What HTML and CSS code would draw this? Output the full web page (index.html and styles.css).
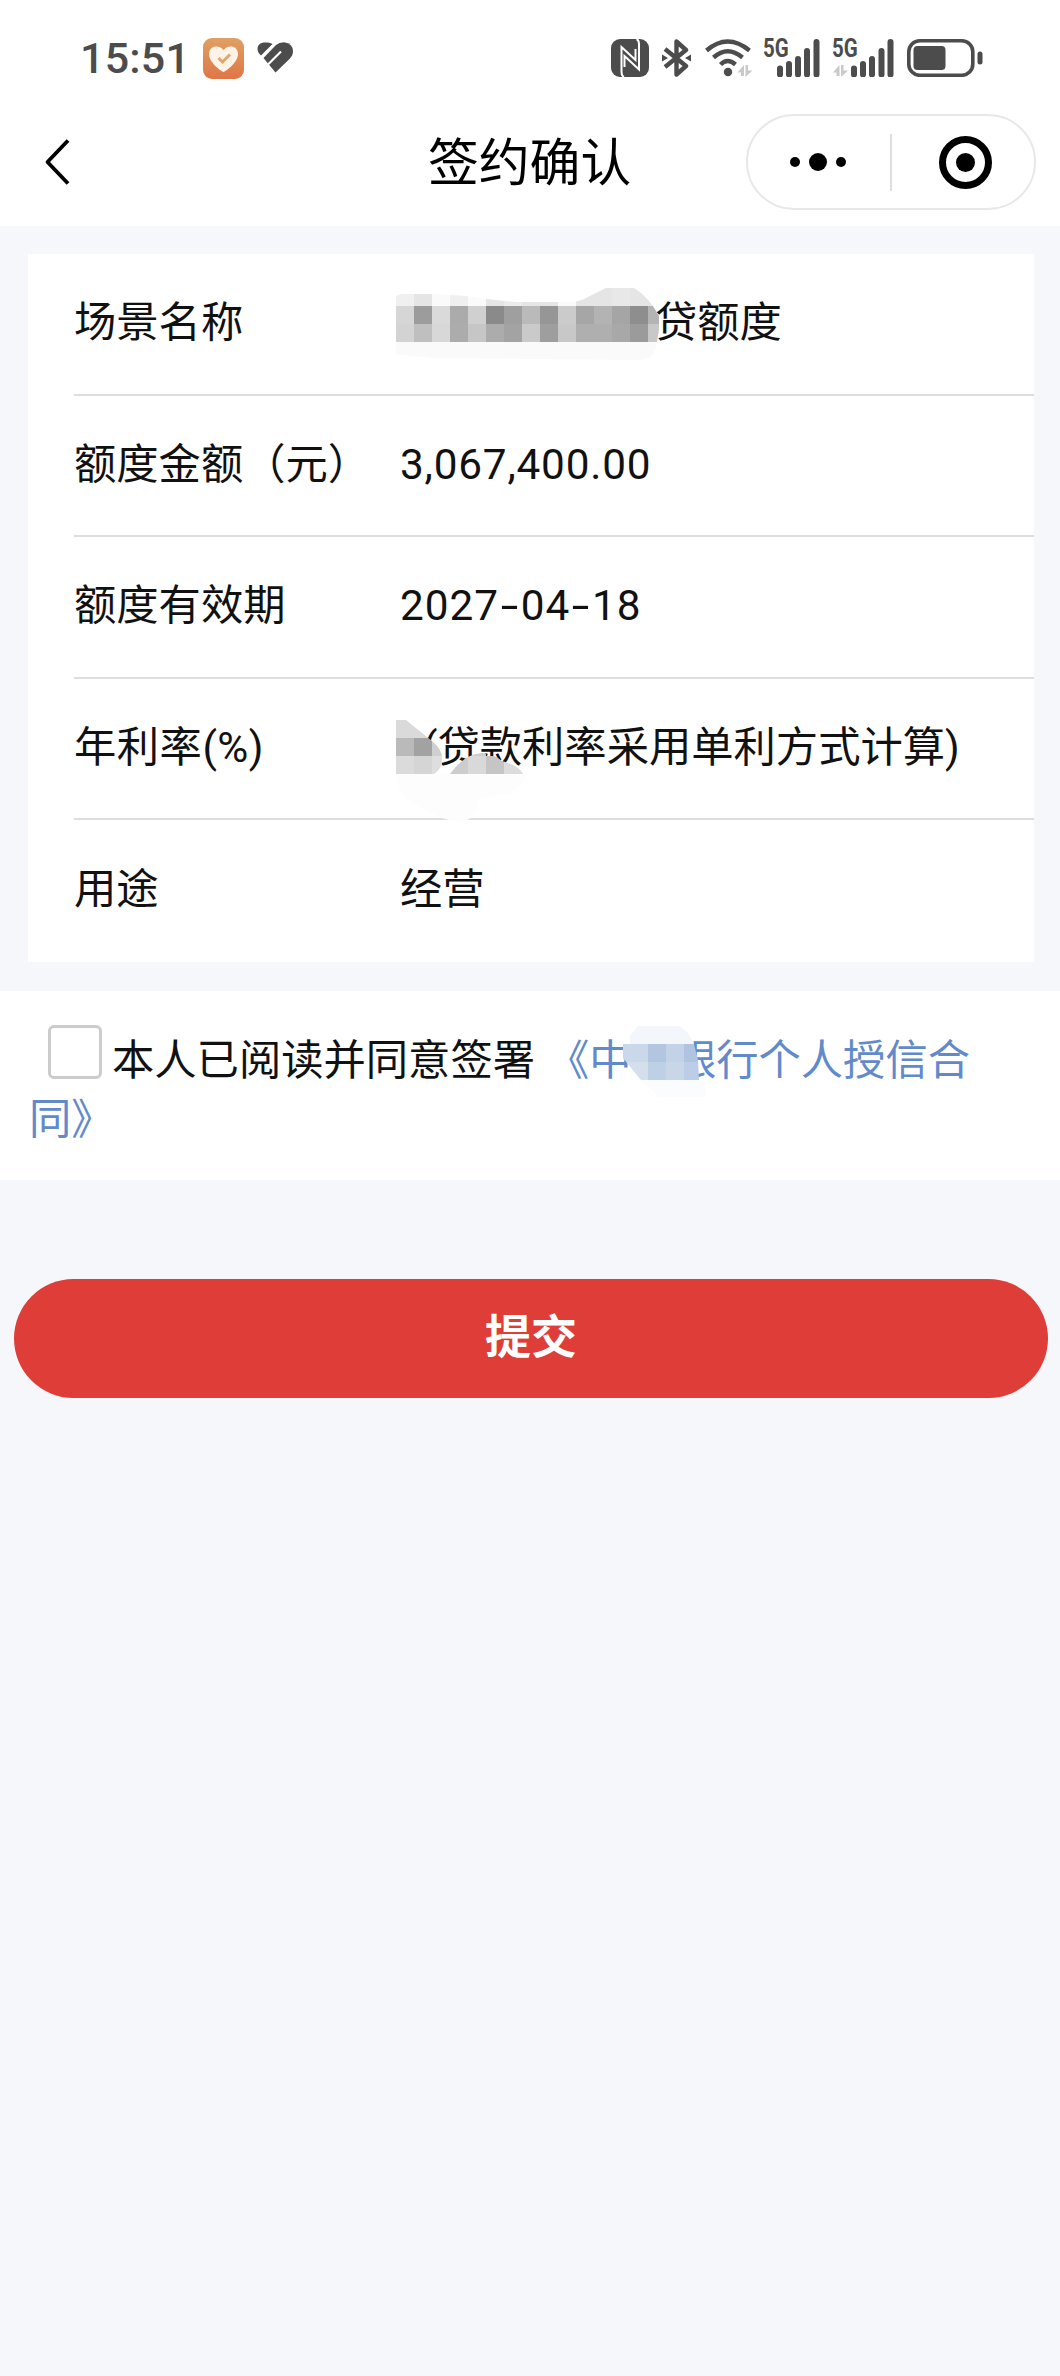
FILE: index.html
```
<!DOCTYPE html>
<html lang="zh-CN">
<head>
    <meta charset="UTF-8">
    <meta name="viewport" content="width=device-width, initial-scale=1.0">
    <title>签约确认</title>
    <link rel="stylesheet" href="styles.css">
</head>
<body>
    <div class="status-bar">
        <div class="status-left">
            <span class="time">15:51</span>
            <svg class="icon-health" viewBox="0 0 41 41" width="41" height="41">
                <defs>
                    <linearGradient id="orange" x1="0" y1="0" x2="0" y2="1">
                        <stop offset="0" stop-color="#dfa064"/>
                        <stop offset="1" stop-color="#e07645"/>
                    </linearGradient>
                </defs>
                <rect width="41" height="41" rx="9" fill="url(#orange)"/>
                <path d="M20.500 34C17 32.500 6 24 6 16C6 8 15.500 6 20.500 12C25.500 6 35 8 35 16C35 24 24 32.500 20.500 34Z" fill="#fdf3e6"/>
                <path d="M15.500 20L19.500 24L27 16.500" fill="none" stroke="#e3a568" stroke-width="3"/>
            </svg>
            <svg class="icon-heart" viewBox="0 0 37 31" width="37" height="31">
                <path d="M4 13.500C-2 8 0 .500 8 .500C11 .500 13.500 .800 15.500 2Z" fill="#4c4c4c"/>
                <path d="M6.500 16L19 3Q22 .300 27 .300Q36 1.500 36 9.500Q36 13 32.500 17L18.500 30.500Z" fill="#4c4c4c"/>
                <path d="M11 22.500L24 9.500" stroke="#fff" stroke-width="2.200"/>
            </svg>
        </div>
        <div class="status-right">
            <svg class="icon-nfc" viewBox="0 0 38 38" width="38" height="38">
                <rect width="38" height="38" rx="9" fill="#4c4c4c"/>
                <path d="M13 38Q10.500 37 10.500 33V8L24.500 21V10" fill="none" stroke="#fff" stroke-width="2"/>
                <path d="M25.500 0Q28 1 28 5V30.500L13.500 17V28" fill="none" stroke="#fff" stroke-width="2"/>
            </svg>
            <svg class="icon-bt" viewBox="0 0 29 38" width="29" height="38">
                <path d="M3 10L24 27L14.500 35.500V2.500L24 11L3 28" fill="none" stroke="#4c4c4c" stroke-width="4.400" stroke-linejoin="round"/>
                <path d="M0 15.500L6 19L0 22.500ZM29 15.500L23 19L29 22.500Z" fill="#4c4c4c"/>
            </svg>
            <svg class="icon-wifi" viewBox="0 0 48 38" width="48" height="38">
                <g fill="none" stroke="#4c4c4c" stroke-width="4.400">
                    <path d="M1.500 11.500Q22.500 -6.500 44.500 11.500"/>
                    <path d="M8.500 18.500Q22.500 6 37.500 18.500"/>
                    <path d="M15.500 25.500Q22.500 18.500 30.500 25.500"/>
                </g>
                <circle cx="23" cy="33" r="4.200" fill="#4c4c4c"/>
                <path d="M32.500 33.500L39 26V37H36V33.500ZM40.500 26H43V31.500H47.500L40.500 38Z" fill="#c9c9c9"/>
            </svg>
            <div class="signal">
                <span class="net">5G</span>
                <svg viewBox="0 0 57 38" width="57" height="38">
                    <path d="M17 29.500V35.500M26 25V35.500M35 20V35.500M44 12V35.500M53.500 3V35.500" stroke="#4c4c4c" stroke-width="6" stroke-linecap="round"/>
                </svg>
            </div>
            <div class="signal signal-second">
                <span class="net">5G</span>
                <svg viewBox="0 0 62 38" width="62" height="38">
                    <path d="M22 29.500V35.500M31 25V35.500M40 20V35.500M49.500 12V35.500M58.500 3V35.500" stroke="#4c4c4c" stroke-width="6" stroke-linecap="round"/>
                    <path d="M1 33.500L7.500 26V37H4.500V33.500ZM9 26H11.500V31.500H16L9 38Z" fill="#c9c9c9"/>
                </svg>
            </div>
            <svg class="icon-battery" viewBox="0 0 76 38" width="76" height="38">
                <rect x="1.800" y="1.800" width="64" height="34.500" rx="11" fill="none" stroke="#4c4c4c" stroke-width="3.600"/>
                <rect x="6.500" y="7" width="32" height="24" rx="4" fill="#4c4c4c"/>
                <rect x="70.500" y="12.500" width="5" height="13" rx="2.500" fill="#4c4c4c"/>
            </svg>
        </div>
    </div>

    <div class="nav">
        <svg class="back" viewBox="0 0 26 48" width="26" height="48">
            <path d="M24 2.500L3.500 24L24 45.500" fill="none" stroke="#000" stroke-width="3.800" stroke-linejoin="round"/>
        </svg>
        <h1 class="title">签约确认</h1>
        <div class="capsule">
            <svg viewBox="0 0 56 18" width="56" height="18">
                <circle cx="5" cy="9" r="5"/>
                <circle cx="28" cy="9" r="9"/>
                <circle cx="51" cy="9" r="5"/>
            </svg>
            <span class="capsule-line"></span>
            <svg viewBox="0 0 53 53" width="53" height="53">
                <circle cx="26.500" cy="26.500" r="23" fill="none" stroke="#000" stroke-width="7"/>
                <circle cx="26.500" cy="26.500" r="9.500"/>
            </svg>
        </div>
    </div>

    <div class="card">
        <div class="row">
            <span class="label">场景名称</span>
            <div class="value"><span class="hidden-name"></span>贷额度
                <svg class="mosaic mosaic-name" viewBox="0 0 264 74" width="264" height="74">
                    <clipPath id="clipName">
                        <path d="M0 9Q2 6 8 6H36L70 8L90 11L120 14H170Q183 14 188 11L210 0H238Q252 8 263 28V42L260 60Q255 72 246 72L36 70L0 66Z"/>
                    </clipPath>
                    <g clip-path="url(#clipName)">
                        <rect width="264" height="74" fill="#fafafa"/>
                        <g stroke-width="18">
                            <path stroke="#f0f0f0" d="M0 9h18M54 9h18"/>
                            <path stroke="#e5e5e5" d="M18 9h18M90 9h18M126 9h36M180 9h36M234 9h30"/>
                            <path stroke="#ececec" d="M108 9h18"/>
                            <path stroke="#e8e8e8" d="M216 9h18"/>
                            <path stroke="#d6d6d6" d="M0 27h18"/>
                            <path stroke="#9c9c9c" d="M18 27h18"/>
                            <path stroke="#dadada" d="M36 27h18"/>
                            <path stroke="#ababab" d="M54 27h18"/>
                            <path stroke="#d0d0d0" d="M72 27h18"/>
                            <path stroke="#8a8a8a" d="M90 27h18"/>
                            <path stroke="#9f9f9f" d="M108 27h18"/>
                            <path stroke="#bababa" d="M126 27h18"/>
                            <path stroke="#969696" d="M144 27h18"/>
                            <path stroke="#cbcbcb" d="M162 27h18"/>
                            <path stroke="#a6a6a6" d="M180 27h18"/>
                            <path stroke="#b3b3b3" d="M198 27h18"/>
                            <path stroke="#a5a5a5" d="M216 27h18"/>
                            <path stroke="#8e8e8e" d="M234 27h18"/>
                            <path stroke="#b4b4b4" d="M252 27h12"/>
                            <path stroke="#d3d3d3" d="M0 45h18"/>
                            <path stroke="#bfbfbf" d="M18 45h18"/>
                            <path stroke="#d8d8d8" d="M36 45h18"/>
                            <path stroke="#acacac" d="M54 45h18"/>
                            <path stroke="#c6c6c6" d="M72 45h18"/>
                            <path stroke="#acacac" d="M90 45h18"/>
                            <path stroke="#a3a3a3" d="M108 45h18"/>
                            <path stroke="#cacaca" d="M126 45h18"/>
                            <path stroke="#9e9e9e" d="M144 45h18"/>
                            <path stroke="#c8c8c8" d="M162 45h18"/>
                            <path stroke="#afafaf" d="M180 45h36"/>
                            <path stroke="#a8a8a8" d="M216 45h18"/>
                            <path stroke="#9b9b9b" d="M234 45h18"/>
                            <path stroke="#c8c8c8" d="M252 45h12"/>
                        </g>
                    </g>
                </svg>
            </div>
        </div>
        <div class="row">
            <span class="label">额度金额（元）</span>
            <div class="value amount">3,067,400.00</div>
        </div>
        <div class="row">
            <span class="label">额度有效期</span>
            <div class="value date">2027<i class="dash">-</i>04<i class="dash">-</i>18</div>
        </div>
        <div class="row">
            <span class="label rate">年利率(%)</span>
            <div class="value"><span class="hidden-rate"></span>(贷款利率采用单利方式计算)
                <svg class="mosaic mosaic-rate" viewBox="0 0 132 102" width="132" height="102">
                    <path d="M0 54H130Q130 75 82 78Q82 98 68 101Q50 103 30 90Q2 80 0 54Z" fill="#fdfdfd"/>
                    <clipPath id="clipRate">
                        <path d="M0 0H10L36 21Q46 29 46 38V44Q43 51 38 54H0ZM54 54Q68 34 86 33Q98 34 106 41Q122 45 127 54Z"/>
                    </clipPath>
                    <g clip-path="url(#clipRate)" stroke-width="18">
                        <path stroke="#dadada" d="M0 9h48"/>
                        <path stroke="#bababa" d="M0 27h18"/>
                        <path stroke="#a2a2a2" d="M18 27h18"/>
                        <path stroke="#cfcfcf" d="M36 27h12"/>
                        <path stroke="#dbdbdb" d="M0 45h18"/>
                        <path stroke="#d5d5d5" d="M18 45h18"/>
                        <path stroke="#dedede" d="M36 45h12"/>
                        <path stroke="#cdcdcd" d="M52 45h20M72 27h18"/>
                        <path stroke="#d9d9d9" d="M72 45h18"/>
                        <path stroke="#c5c5c5" d="M90 45h18"/>
                        <path stroke="#dcdcdc" d="M108 45h20"/>
                    </g>
                </svg>
            </div>
        </div>
        <div class="row">
            <span class="label">用途</span>
            <div class="value">经营</div>
        </div>
    </div>

    <div class="agreement">
        <span class="checkbox"></span><span>本人已阅读并同意签署</span><a class="contract">《中<span class="hidden-char"></span>银行个人授信合同》</a>
        <svg class="mosaic mosaic-bank" viewBox="0 0 90 74" width="90" height="74">
            <path d="M20 54H84L86 71H40Z" fill="#fafcfe"/>
            <path d="M10 18V10L18 0H59L68 7L74 18Z" fill="#f3f6fa"/>
            <clipPath id="clipBank">
                <path d="M3 18H74L78 34L79 54H21L3 32Z"/>
            </clipPath>
            <g clip-path="url(#clipBank)" stroke-width="18">
                <path stroke="#c9d9ea" d="M0 27h28"/>
                <path stroke="#b3c6e1" d="M28 27h18"/>
                <path stroke="#c2d3e8" d="M46 27h18"/>
                <path stroke="#b0c4e0" d="M64 27h18"/>
                <path stroke="#d5deeb" d="M0 45h28"/>
                <path stroke="#bdd0e6" d="M28 45h18"/>
                <path stroke="#c9d6e8" d="M46 45h18"/>
                <path stroke="#bccde7" d="M64 45h18"/>
            </g>
        </svg>
    </div>

    <button class="submit" type="button">提交</button>
</body>
</html>
```
FILE: styles.css
```
* {
    box-sizing: border-box;
}

body {
    margin: 0;
    min-height: 2376px;
    background-color: #f5f7fb;
    font-family: Roboto, "Noto Sans CJK SC", sans-serif;
    font-size: 42.3px;
    color: #111;
}

svg {
    display: block;
    flex-shrink: 0;
}

.status-bar {
    display: flex;
    justify-content: space-between;
    height: 98px;
    padding: 18px 77px 0 80px;
    background-color: #fff;
}

.status-left,
.status-right {
    display: flex;
    align-items: center;
}

.time {
    width: 123px;
    font-size: 43px;
    font-weight: 500;
    line-height: 50px;
    letter-spacing: 0.2px;
    color: #4c4c4c;
}

.icon-heart {
    margin-left: 13px;
    margin-top: -1px;
}

.icon-bt {
    margin-left: 13px;
}

.icon-wifi {
    margin-left: 14px;
}

.signal {
    position: relative;
    margin-left: 10px;
}

.signal-second {
    margin-left: 12px;
}

.net {
    position: absolute;
    left: 0;
    top: 0;
    font-size: 25px;
    font-weight: 700;
    line-height: 20px;
    color: #4c4c4c;
    transform: scaleX(0.82);
    transform-origin: left;
}

.icon-battery {
    margin-left: 13px;
}

.nav {
    display: flex;
    justify-content: space-between;
    align-items: center;
    height: 128px;
    padding: 0 24px 0 44px;
    background-color: #fff;
}

.title {
    margin: 0 0 0 358px;
    padding-top: 4px;
    flex: 1;
    font-size: 50.8px;
    font-weight: 400;
    line-height: 72px;
    color: #000;
}

.capsule {
    display: flex;
    align-items: center;
    width: 290px;
    height: 96px;
    padding-left: 42px;
    border: 2px solid #e8e8e8;
    border-radius: 48px;
}

.capsule-line {
    width: 2px;
    height: 57px;
    margin: 0 47px 0 44px;
    background-color: #dedede;
}

.card {
    margin: 28px 26px 0 28px;
    padding-left: 46px;
    background-color: #fff;
}

.row {
    display: flex;
    height: 141.6px;
    line-height: 138px;
    border-bottom: 2px solid #dedede;
    white-space: nowrap;
}

.row:last-child {
    line-height: 140px;
    border-bottom: none;
}

.label {
    width: 326px;
}

.value {
    position: relative;
}

.amount {
    letter-spacing: 0.8px;
}

.date {
    letter-spacing: 1px;
}

.rate {
    letter-spacing: 0.5px;
}

.dash {
    display: inline-block;
    margin: 0 4px 0 5px;
    font-style: normal;
    transform: scaleX(1.5);
}

.hidden-name {
    display: inline-block;
    width: 255px;
}

.hidden-rate {
    display: inline-block;
    width: 23px;
}

.hidden-char {
    display: inline-block;
    width: 1em;
}

.mosaic {
    position: absolute;
}

.mosaic-name {
    left: -4px;
    top: 34px;
}

.mosaic-rate {
    left: -4px;
    top: 41px;
}

.mosaic-bank {
    left: 620px;
    top: 35px;
}

.agreement {
    position: relative;
    height: 189px;
    margin-top: 29px;
    padding: 34px 80px 0 29px;
    background-color: #fff;
    line-height: 59px;
}

.checkbox {
    display: inline-block;
    width: 54px;
    height: 54px;
    margin: 0 10px 0 19px;
    vertical-align: -4px;
    border: 3px solid #ccc;
    border-radius: 6px;
}

.contract {
    margin-left: 12px;
    color: #628acb;
}

.submit {
    display: block;
    width: 1034px;
    height: 119px;
    margin: 99px 0 0 14px;
    padding: 0 0 10px;
    border: none;
    border-radius: 60px;
    background-color: #df3d38;
    color: #fff;
    font-family: "Noto Sans CJK SC", sans-serif;
    font-size: 46px;
    font-weight: 700;
    cursor: pointer;
}
```
